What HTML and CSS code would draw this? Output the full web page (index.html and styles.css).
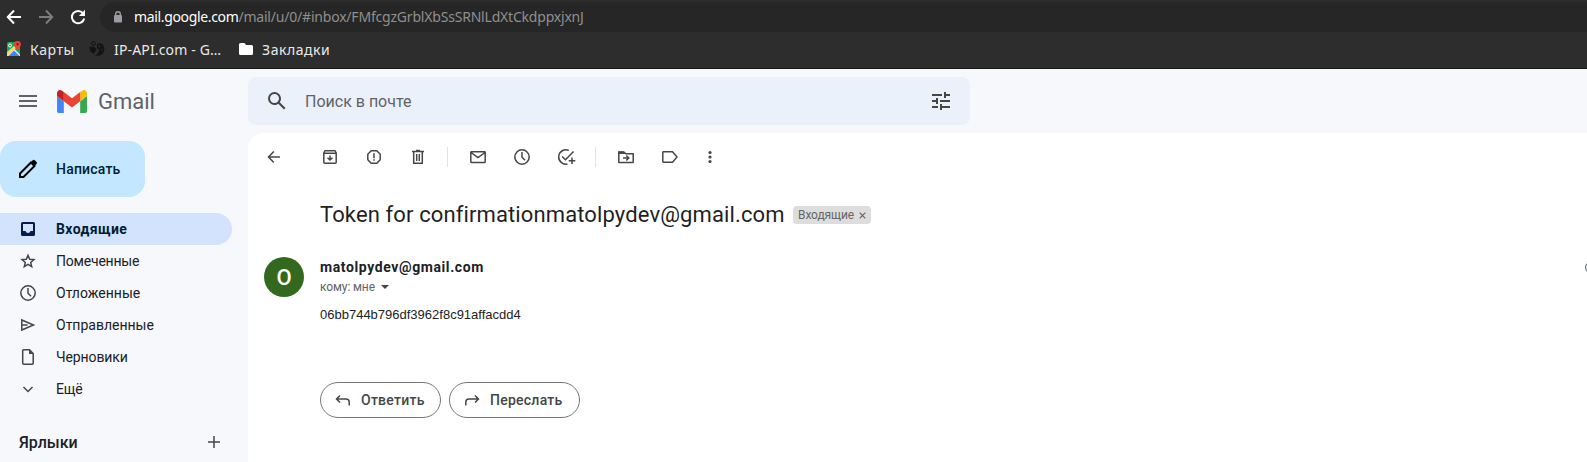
FILE: index.html
```html
<!DOCTYPE html>
<html lang="ru">
<head>
<meta charset="utf-8">
<title>Gmail</title>
<link rel="stylesheet" href="styles.css">
</head>
<body>
<header class="browser">
  <div class="nav-row">
    <div class="nav-buttons">
      <svg width="16" height="16" viewBox="0 0 16 16" fill="none" stroke="#fff" stroke-width="2"><path d="M15 8H2.5M8 1.5 1.8 8 8 14.5"/></svg>
      <svg width="16" height="16" viewBox="0 0 16 16" fill="none" stroke="#7d7d7d" stroke-width="2"><path d="M1 8h12.5M8 1.5 14.2 8 8 14.5"/></svg>
      <svg width="16" height="16" viewBox="0 0 16 16"><path d="M13 4.2A6.2 6.2 0 1 0 14.2 9.500" fill="none" stroke="#fff" stroke-width="2"/><path d="M15 .8V7H8.800z" fill="#fff"/></svg>
    </div>
    <div class="omnibox">
      <svg width="8" height="12" viewBox="0 0 8 12"><path d="M1.700 5V3a2.300 2.300 0 0 1 4.600 0v2" fill="none" stroke="#9a9da3" stroke-width="1.400"/><rect y="4" width="8" height="7.500" rx="1" fill="#9a9da3"/></svg>
      <span class="url"><span class="host">mail.google.com</span><span class="path">/mail/u/0/#inbox/FMfcgzGrblXbSsSRNlLdXtCkdppxjxnJ</span></span>
    </div>
  </div>
  <div class="bookmarks">
    <a class="bookmark maps"><svg width="16" height="16" viewBox="0 0 16 16"><rect x="1" y="1" width="13" height="14" rx="1.500" fill="#1fa463"/><path d="M1 13.500 7.500 7 14 13.500V15H1z" fill="#e8eaed"/><path d="M2.500 15 8 9.500l5.500 5.500z" fill="#4285f4"/><path d="m1 11 7-6 2 2-9 8z" fill="#fdd663"/><circle cx="4" cy="4.500" r="1.500" fill="none" stroke="#fff"/><path d="M11.500 0a3.400 3.400 0 0 0-3.400 3.400c0 2.600 2.700 3.600 3.400 6.600.700-3 3.400-4 3.400-6.600A3.400 3.400 0 0 0 11.500 0z" fill="#ea4335"/><circle cx="11.500" cy="3.300" r="1.200" fill="#8c1d18"/></svg><span>Карты</span></a>
    <a class="bookmark ipapi"><svg width="16" height="16" viewBox="0 0 16 16" fill="#131313"><circle cx="4.500" cy="2.500" r="1.900" fill="none" stroke="#131313"/><path d="M.5 5.500 5 6l2.500 2L6 11l-1.500 2L1 10zM8 3l3-1 3 1.500L15.500 8 14 12.500 11 14.500 6 15l3-3 1.500-3L8 7z"/><path d="m9 4 2 1-1 2m2 1 2 1" stroke="#2d2d2d" fill="none"/></svg><span>IP-API.com - G…</span></a>
    <a class="bookmark folder"><svg width="16" height="16" viewBox="0 0 16 16"><path d="M1 3.500Q1 2 2.500 2h4L8 4h5.500Q15 4 15 5.500v7q0 1.500-1.500 1.500h-11Q1 14 1 12.500z" fill="#fff"/></svg><span>Закладки</span></a>
  </div>
</header>

<div class="app">
  <aside class="sidebar">
    <div class="brand">
      <svg class="menu" width="18" height="12" viewBox="0 0 18 12"><path d="M0 1h18M0 6h18M0 11h18" stroke="#5f6368" stroke-width="2"/></svg>
      <svg width="30" height="23" viewBox="52 42 88 66" preserveAspectRatio="none"><path fill="#4285f4" d="M58 108h14V74L52 59v43c0 3.320 2.690 6 6 6"/><path fill="#34a853" d="M120 108h14c3.320 0 6-2.690 6-6V59l-20 15"/><path fill="#fbbc04" d="M120 48v26l20-15v-8c0-7.420-8.470-11.650-14.400-7.200"/><path fill="#ea4335" d="M72 74V48l24 18 24-18v26L96 92"/><path fill="#c5221f" d="M52 51v8l20 15V48l-5.600-4.200c-5.940-4.450-14.400-.220-14.400 7.200"/></svg>
      <span class="wordmark">Gmail</span>
    </div>
    <button class="compose">
      <svg width="20" height="20" viewBox="0 0 20 20" fill="none" stroke="#000" stroke-width="2"><path d="M2 18v-3.500L13 3.500 16.500 7l-11 11z"/><path d="m12.500 3.500 2.500-2.500Q16 .500 17 1.500L18.500 3q1 1 0 2L16 7.500z" fill="#000" stroke="none"/></svg>
      <span class="t-compose">Написать</span>
    </button>
    <nav class="folders">
      <a class="item active"><svg width="20" height="20" viewBox="0 0 20 20"><path fill="#041e49" fill-rule="evenodd" d="M4.500 3h11Q17 3 17 4.500v11q0 1.500-1.500 1.500h-11Q3 17 3 15.500v-11Q3 3 4.500 3zM5 5v7h2.500Q8 14 10 14t2.500-2H15V5z"/></svg><span class="t-inbox">Входящие</span></a>
      <a class="item"><svg width="20" height="20" viewBox="0 0 20 20" fill="none" stroke="#444746" stroke-width="1.500"><path d="m10 4.300 1.700 3.900 4.200.400-3.200 2.800 1 4.200-3.700-2.200-3.700 2.200 1-4.200-3.200-2.800 4.200-.400z"/></svg><span class="t-star">Помеченные</span></a>
      <a class="item"><svg width="20" height="20" viewBox="0 0 20 20" fill="none" stroke="#444746" stroke-width="1.500"><circle cx="10" cy="10" r="7.200"/><path d="M10 5v5.300l3 3"/></svg><span class="t-snooze">Отложенные</span></a>
      <a class="item"><svg width="20" height="20" viewBox="0 0 20 20" fill="none" stroke="#444746" stroke-width="1.500"><path d="M3.800 5v10L15.500 10zM4 10h5.500"/></svg><span class="t-sent">Отправленные</span></a>
      <a class="item"><svg width="20" height="20" viewBox="0 0 20 20"><path d="M5.500 2.800h6L15.200 6.500v9.700q0 1-1 1H5.700q-1 0-1-1V3.600q0-.800.800-.800z" fill="none" stroke="#444746" stroke-width="1.500"/><path d="M11 2.500V7h4.500z" fill="#444746"/></svg><span class="t-drafts">Черновики</span></a>
      <a class="item"><svg width="20" height="20" viewBox="0 0 20 20" fill="none" stroke="#444746" stroke-width="1.500"><path d="m5.500 8 4.500 4.500L14.500 8"/></svg><span class="t-more">Ещё</span></a>
    </nav>
    <div class="labels"><span class="t-labels">Ярлыки</span><svg width="12" height="12" viewBox="0 0 12 12"><path d="M6 0v12M0 6h12" stroke="#444746" stroke-width="1.500"/></svg></div>
  </aside>

  <main class="content">
    <div class="search">
      <svg width="24" height="24" viewBox="0 0 24 24"><path fill="#444746" d="M20.490 19l-5.730-5.730C15.530 12.200 16 10.910 16 9.500A6.500 6.500 0 1 0 9.500 16c1.410 0 2.700-.470 3.770-1.240L19 20.490 20.490 19zM5 9.500C5 7.010 7.010 5 9.500 5S14 7.010 14 9.500 11.990 14 9.500 14 5 11.990 5 9.500z"/></svg>
      <span class="placeholder">Поиск в почте</span>
      <svg class="tune" width="24" height="24" viewBox="0 0 24 24"><path fill="#444746" d="M3 17v2h6v-2H3zM3 5v2h10V5H3zm10 16v-2h8v-2h-8v-2h-2v6h2zM7 9v2H3v2h4v2h2V9H7zm14 4v-2H11v2h10zm-6-4h2V7h4V5h-4V3h-2v6z"/></svg>
    </div>
    <section class="mail">
      <div class="toolbar">
        <svg class="back" width="20" height="20" viewBox="0 0 20 20"><path d="M16 10H5M9.800 4.500 4.500 10l5.300 5.500"/></svg>
        <svg width="20" height="20" viewBox="0 0 20 20"><path d="M3.800 6v9.200q0 1 1 1h10.400q1 0 1-1V6L15 3.800H5zM10 8.500v4M7.500 10.700l2.500 2.300 2.500-2.300"/><path d="M4 6.200h12" stroke-width="1.500"/><path d="M5 4.800h10" stroke="#aaa" stroke-width="1"/></svg>
        <svg width="20" height="20" viewBox="0 0 20 20"><path d="M7.200 3.800h5.600l3.400 3.400v5.600l-3.400 3.400H7.200l-3.400-3.400V7.200zM10 6.200v5M10 12.300v1.500"/></svg>
        <svg width="20" height="20" viewBox="0 0 20 20"><path d="M4 4.500h12M8 3.500h4M5.700 4.500v11.700h8.600V4.500M8.700 7v7M11.300 7v7"/></svg>
        <i class="divider"></i>
        <svg width="20" height="20" viewBox="0 0 20 20"><path d="M3.500 4.800h13q.700 0 .700.700v9.200q0 .700-.700.700h-13q-.700 0-.700-.700V5.500q0-.700.700-.700zM3 5.500l7 5 7-5"/></svg>
        <svg width="20" height="20" viewBox="0 0 20 20"><circle cx="10" cy="10" r="7.200"/><path d="M10 5v5.300l3 3"/></svg>
        <svg width="20" height="20" viewBox="0 0 20 20"><path d="M12.800 3.400A7.200 7.200 0 1 0 11.500 17M6 9.500l3.500 3.300 8-8.300M16 10.500v6.500M12.700 13.700h6.600"/></svg>
        <i class="divider"></i>
        <svg width="20" height="20" viewBox="0 0 20 20"><path d="M2.800 15.200V5h5l2 1.800h7.400v8.400q0 .400-.400.400H3.200q-.400 0-.400-.400zM7 11h5.500M10.300 8.500l2.500 2.500-2.500 2.500"/><path d="M2.500 4.500h5.200L9.500 7h-7z" fill="#444746" stroke="none"/></svg>
        <svg width="20" height="20" viewBox="0 0 20 20"><path d="M3.500 4.800h9L17 10l-4.500 5.200h-9q-.700 0-.700-.700V5.500q0-.700.700-.700z"/></svg>
        <svg class="kebab" width="20" height="20" viewBox="0 0 20 20"><g fill="#444746" stroke="none"><circle cx="10" cy="5.500" r="1.600"/><circle cx="10" cy="10" r="1.600"/><circle cx="10" cy="14.500" r="1.600"/></g></svg>
      </div>
      <div class="subject">
        <h1>Token for confirmationmatolpydev@gmail.com</h1>
        <span class="chip"><span class="t-chip">Входящие</span><svg width="7" height="7" viewBox="0 0 7 7"><path d="m.700.700 5.600 5.600M6.300.700.700 6.300" stroke="#666" stroke-width="1.200"/></svg></span>
      </div>
      <article class="message">
        <div class="avatar">О</div>
        <div class="details">
          <div class="from"><strong>matolpydev@gmail.com</strong><svg width="2" height="9" viewBox="0 0 2 9"><path d="M2.500.500Q.600 1.500.600 4.500t1.900 4" fill="none" stroke="#5f6368" stroke-width="1.100"/></svg></div>
          <div class="to"><span class="t-to">кому: мне</span><svg width="8" height="4" viewBox="0 0 8 4"><path d="M0 0h8L4 4z" fill="#444746"/></svg></div>
          <p class="body">06bb744b796df3962f8c91affacdd4</p>
          <div class="actions">
            <button class="reply"><svg width="20" height="20" viewBox="0 0 20 20"><path d="M7 5.500 3.500 9 7 12.500M3.500 9H13q3.200 0 3.200 3.200V15.500"/></svg><span class="t-reply">Ответить</span></button>
            <button class="forward"><svg width="20" height="20" viewBox="0 0 20 20"><path d="M13 5.500 16.500 9 13 12.500M16.500 9H7q-3.200 0-3.200 3.200V15.500"/></svg><span class="t-forward">Переслать</span></button>
          </div>
        </div>
      </article>
    </section>
  </main>
</div>
</body>
</html>
```
FILE: styles.css
```css
* { box-sizing: border-box; }
html, body { margin: 0; height: 462px; overflow: hidden; }
body { font-family: Roboto, "Noto Sans", sans-serif; color: #202124; background: #f6f8fc; }
svg { display: block; flex: none; }
span, strong { white-space: nowrap; }
button { border: 0; background: none; margin: 0; font-family: inherit; }

/* Browser chrome */
.browser { height: 69px; background: #2d2d2d; border-bottom: 1px solid #151515; padding-top: 2px; font-family: "Noto Sans", sans-serif; }
.nav-row { display: flex; height: 30px; align-items: center; }
.nav-buttons { display: flex; gap: 16px; width: 100px; padding-left: 6px; }
.omnibox { flex: 1; height: 30px; border-radius: 15px 0 0 15px; background: #262626; display: flex; align-items: center; padding-left: 14px; gap: 12px; }
.url { font-size: 14px; line-height: 18px; padding-bottom: 1px; color: #8f8f8f; }
.host { color: #fff; letter-spacing: -0.35px; }
.path { letter-spacing: -0.2px; }
.bookmarks { display: flex; height: 36px; align-items: center; color: #e9e9e9; font-size: 14px; padding: 0 0 2px 6px; letter-spacing: 0.25px; }
.bookmark { display: flex; align-items: center; gap: 8px; }
.maps { width: 83px; }
.ipapi { width: 149px; letter-spacing: 0.15px; gap: 9px; }
.folder { letter-spacing: 0.55px; }
.maps span { letter-spacing: 0.55px; }

.app { display: flex; height: 393px; }
.sidebar { width: 248px; flex: none; }
.brand { display: flex; height: 64px; align-items: center; padding-left: 19px; margin-bottom: 8px; }
.menu { margin-right: 20px; }
.wordmark { font-size: 22px; color: #5f6368; margin-left: 11px; }
.compose { display: flex; align-items: center; gap: 18px; width: 145px; height: 56px; padding: 0 0 0 18px; border-radius: 16px; background: #c2e7ff; color: #001d35; font-size: 14px; font-weight: 500; }
.t-compose { letter-spacing: 0.2px; }
.folders { padding-top: 16px; }
.item { display: flex; align-items: center; gap: 18px; width: 232px; height: 32px; padding-left: 18px; font-size: 14px; }
.active { background: #d3e3fd; border-radius: 0 16px 16px 0; font-weight: 700; color: #001d35; }
.t-inbox { letter-spacing: 0.4px; }
.t-star { letter-spacing: -0.2px; }
.t-drafts { letter-spacing: -0.1px; }
.t-more { letter-spacing: -0.2px; }
.labels { display: flex; align-items: center; justify-content: space-between; width: 220px; height: 32px; margin-top: 21px; padding-left: 19px; font-size: 16px; font-weight: 500; }

.content { flex: 1; min-width: 0; padding-top: 8px; }
.search { display: flex; align-items: center; width: 722px; height: 48px; padding: 0 17px; border-radius: 8px; background: #eaf1fb; margin-bottom: 8px; }
.placeholder { font-size: 16px; color: #5f6368; margin-left: 16px; }
.tune { margin-left: auto; }
.mail { height: 329px; background: #fff; border-top-left-radius: 16px; overflow: hidden; }
.toolbar { display: flex; align-items: center; height: 48px; padding-left: 16px; gap: 24px; }
.toolbar svg, .actions svg { fill: none; stroke: #444746; stroke-width: 1.5; }
.back { margin-right: 12px; }
.divider { width: 1px; height: 20px; background: #e3e3e3; margin: 0 -4px 0 -5px; }
.kebab { margin-left: -4px; }
.subject { display: flex; align-items: center; padding: 20px 0 0 72px; height: 47px; gap: 10px; }
h1 { margin: 0; font-size: 22px; font-weight: 400; line-height: 28px; width: 463px; white-space: nowrap; color: #1f1f1f; letter-spacing: 0.12px; padding-top: 1px; }
.chip { display: flex; align-items: center; justify-content: space-between; width: 78px; height: 18px; padding: 0 5px; border-radius: 4px; background: #ddd; color: #666; font-size: 12px; margin-top: 1px; }
.t-chip { letter-spacing: -0.1px; }
.message { display: flex; padding: 29px 0 0 16px; gap: 16px; }
.avatar { width: 40px; height: 40px; border-radius: 50%; background: #33691e; color: #fff; font-size: 22px; font-weight: 500; line-height: 41px; text-align: center; flex: none; }
.details { flex: 1; min-width: 0; }
.from { display: flex; justify-content: space-between; align-items: center; height: 20px; line-height: 20px; font-size: 14px; }
.from strong { letter-spacing: 0.6px; }
.to { display: flex; align-items: center; height: 20px; gap: 6px; font-size: 12px; color: #5f6368; }
.t-to { letter-spacing: -0.1px; }
.body { margin: 8px 0 0; height: 20px; font: 13px/20px "Liberation Sans", sans-serif; color: #222; }
.actions { display: flex; gap: 8px; margin-top: 57px; }
.actions button { display: flex; align-items: center; gap: 8px; height: 36px; padding: 0 0 0 12px; border: 1px solid #747775; border-radius: 18px; color: #444746; font-size: 14px; font-weight: 500; letter-spacing: 0.25px; }
.reply { width: 121px; }
.forward { width: 131px; }
```
